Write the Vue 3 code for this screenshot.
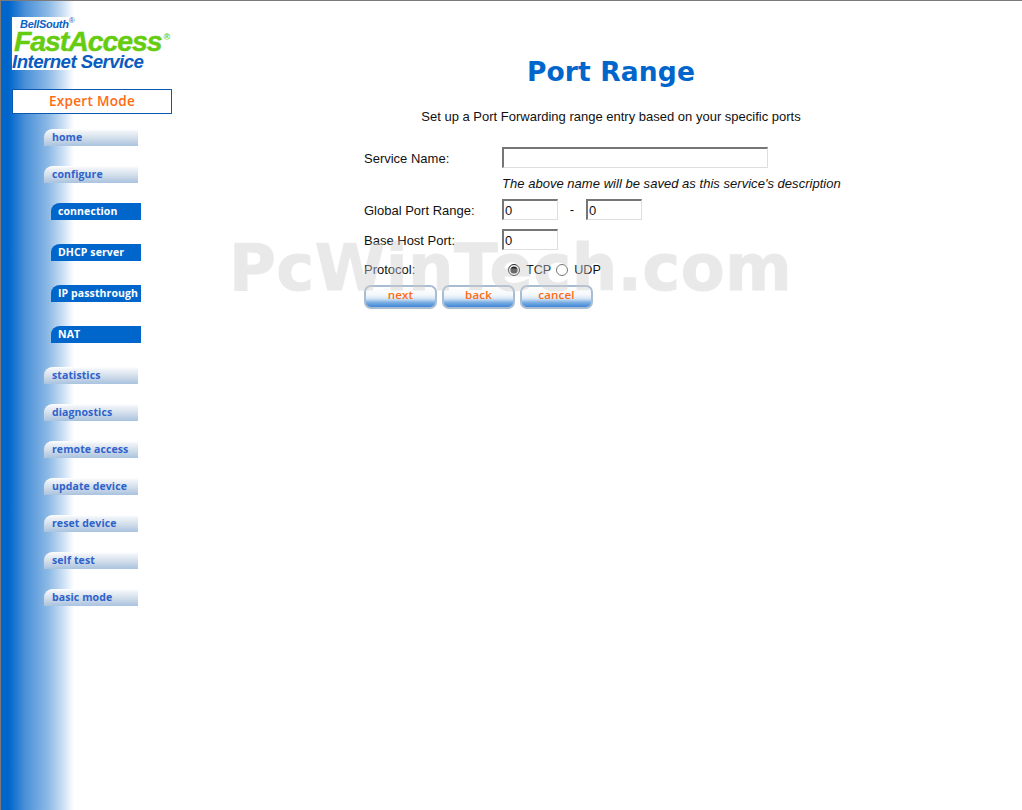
<script setup>
const before = ['home', 'configure']
const subs = ['connection', 'DHCP server', 'IP passthrough', 'NAT']
const after = ['statistics', 'diagnostics', 'remote access', 'update device', 'reset device', 'self test', 'basic mode']
const buttons = ['next', 'back', 'cancel']
</script>

<template>
  <div class="page">
    <aside class="side">
      <div class="logo">
        <div class="bell">BellSouth<sup>®</sup></div>
        <div class="fast">FastAccess<sup>®</sup></div>
        <div class="inet">Internet Service</div>
      </div>
      <div class="mode">Expert Mode</div>
      <nav class="nav">
        <a v-for="b in before" :key="b" class="item">{{ b }}</a>
        <a v-for="s in subs" :key="s" class="sub">{{ s }}</a>
        <a v-for="a in after" :key="a" class="item">{{ a }}</a>
      </nav>
    </aside>
    <main class="main">
      <h1 class="title">Port Range</h1>
      <p class="intro">Set up a Port Forwarding range entry based on your specific ports</p>
      <form class="form" @submit.prevent>
        <div class="row r-name">
          <label class="lab">Service Name:</label>
          <input class="field wide" type="text" value="" />
        </div>
        <div class="row r-hint">
          <span class="lab"></span>
          <em class="hint">The above name will be saved as this service's description</em>
        </div>
        <div class="row r-global">
          <label class="lab">Global Port Range:</label>
          <input class="field" type="text" value="0" />
          <span class="dash">-</span>
          <input class="field" type="text" value="0" />
        </div>
        <div class="row r-base">
          <label class="lab">Base Host Port:</label>
          <input class="field" type="text" value="0" />
        </div>
        <div class="row r-proto">
          <label class="lab plain">Protocol:</label>
          <input class="radio first" type="radio" name="proto" checked />
          <span class="rlab tcp">TCP</span>
          <input class="radio" type="radio" name="proto" />
          <span class="rlab">UDP</span>
        </div>
        <div class="btns">
          <button v-for="b in buttons" :key="b" class="btn" type="button">{{ b }}</button>
        </div>
      </form>
    </main>
    <div class="mark">PcWinTech.com</div>
  </div>
</template>

<style>
html, body { margin: 0; padding: 0; background: #fff; overflow: hidden; }
</style>

<style scoped>
.page {
  position: relative;
  display: flex;
  height: 810px;
  box-sizing: border-box;
  border-top: 1px solid #7a7a7a;
  border-left: 1px solid #7a7a7a;
  background: #fff;
  font-family: "Liberation Sans", Arial, sans-serif;
  overflow: hidden;
}
.side {
  width: 171px;
  flex: none;
  padding: 16px 0 0 11px;
  box-sizing: border-box;
  background: linear-gradient(90deg, #0066cc 0, #0066cc 8px, #4a90d8 24px, #8fbbe6 48px, #d5e5f6 64px, #fff 73px) no-repeat;
  background-size: 74px 100%;
}
.logo {
  width: 61px;
  height: 53px;
  background: #fff;
  font-style: italic;
  font-weight: bold;
  white-space: nowrap;
}
.bell {
  color: #0a62c4;
  font-size: 11px;
  line-height: 11px;
  padding: 2px 0 0 8px;
  letter-spacing: -0.3px;
}
.bell sup { font-size: 8px; line-height: 0; font-style: normal; font-weight: normal; }
.fast {
  color: #66cc11;
  font-size: 28.5px;
  line-height: 23px;
  padding-left: 2px;
  letter-spacing: -1.1px;
  -webkit-text-stroke: 0.4px #66cc11;
}
.fast sup {
  font-size: 9px;
  line-height: 0;
  vertical-align: 11px;
  font-style: normal;
  letter-spacing: 0;
  margin-left: 2px;
  -webkit-text-stroke: 0;
}
.inet {
  color: #0a5cc0;
  font-size: 18.7px;
  line-height: 17px;
  letter-spacing: -0.55px;
}
.mode {
  width: 160px;
  height: 25px;
  margin-top: 19px;
  box-sizing: border-box;
  border: 1px solid #0a58b0;
  background: #fff;
  color: #ff6a13;
  font: 600 13.5px/23px "Open Sans", sans-serif;
  letter-spacing: 0.3px;
  text-align: center;
}
.nav {
  display: flex;
  flex-direction: column;
  margin-top: 15px;
  font-family: "Open Sans", sans-serif;
  font-weight: 700;
  font-size: 10.5px;
  letter-spacing: 0.1px;
}
.item {
  display: block;
  width: 94px;
  height: 17px;
  margin: 0 0 20px 32px;
  padding-left: 8px;
  box-sizing: border-box;
  line-height: 17px;
  color: #2f62cc;
  white-space: nowrap;
  border-top-left-radius: 9px 8px;
  background: linear-gradient(180deg, #ffffff 0, #ecf1f6 18%, #d9e3ee 45%, #c4d4e6 70%, #a9c3df 100%);
}
.sub {
  display: block;
  width: 90px;
  height: 17px;
  margin: 0 0 24px 39px;
  padding-left: 7px;
  box-sizing: border-box;
  line-height: 16px;
  color: #fff;
  white-space: nowrap;
  border-top-left-radius: 9px 8px;
  background: #0066cc;
}
.main {
  flex: 1;
  min-width: 0;
  padding-left: 192px;
  font-size: 13px;
  color: #111;
}
.title {
  width: 494px;
  margin: 54px 0 0;
  padding: 0;
  text-align: center;
  font: bold 26.5px/34px "DejaVu Sans", sans-serif;
  letter-spacing: 0.15px;
  color: #0066cc;
}
.intro {
  width: 494px;
  margin: 20px 0 0;
  text-align: center;
  font-size: 13px;
  line-height: 16px;
}
.form { margin-top: 22px; }
.row { display: flex; align-items: center; }
.lab { width: 138px; flex: none; padding-top: 2px; }
.lab.plain { padding-top: 0; }
.r-name { height: 21px; }
.r-hint { height: 21px; margin-top: 5px; }
.r-global { height: 21px; margin-top: 5px; }
.r-base { height: 21px; margin-top: 9px; }
.r-proto { height: 21px; margin-top: 9px; }
.field {
  width: 56px;
  height: 21px;
  box-sizing: border-box;
  margin: 0;
  padding: 1px;
  border: 2px solid #dedede;
  border-top-color: #767676;
  border-left-color: #767676;
  border-right-width: 1px;
  border-bottom-width: 1px;
  border-radius: 0;
  outline: none;
  background: #fff;
  color: #111;
  font: 13px "Liberation Sans", Arial, sans-serif;
}
.wide { width: 266px; }
.dash { width: 28px; text-align: center; }
.hint { font-style: italic; white-space: nowrap; letter-spacing: 0.03px; }
.radio { width: 12px; height: 12px; margin: 0; accent-color: #222; flex: none; }
.first { margin-left: 6px; }
.rlab { margin: 0 6px; white-space: nowrap; font-size: 12.6px; }
.tcp { margin: 0 5px 0 6px; }
.btns { display: flex; gap: 5px; margin-top: 5px; }
.btn {
  width: 73px;
  height: 24px;
  box-sizing: border-box;
  margin: 0;
  padding: 0 0 5px;
  border: 2px solid #a9bdd2;
  border-radius: 7px;
  background: linear-gradient(180deg, #ffffff 0, #f4f7fb 40%, #d6e5f5 58%, #78ade3 78%, #3f86d6 100%);
  color: #ff6a13;
  font: 600 11.5px/16px "Open Sans", sans-serif;
  letter-spacing: 0.2px;
}
.mark {
  position: absolute;
  left: 228px;
  top: 229px;
  font: bold 64px/76px "DejaVu Sans", sans-serif;
  color: #cdcdcd;
  -webkit-text-stroke: 1px #cdcdcd;
  opacity: 0.42;
  letter-spacing: 0.4px;
  white-space: nowrap;
  pointer-events: none;
}
</style>
